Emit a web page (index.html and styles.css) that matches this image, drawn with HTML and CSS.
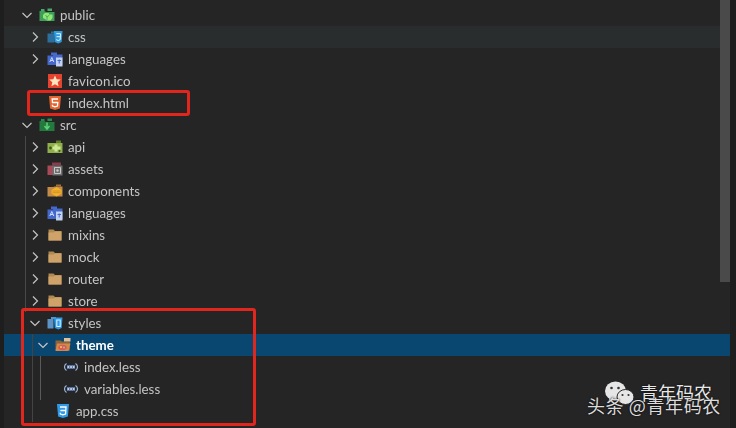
FILE: index.html
```html
<!DOCTYPE html>
<html>
<head>
    <title>Explorer</title>
    <link rel="stylesheet" href="styles.css">
</head>
<body>
    <svg class="defs" width="0" height="0">
        <symbol id="open" viewBox="0 0 16 16"><path d="M3.500 6 8 10.500 12.500 6" fill="none" stroke="#c5c5c5" stroke-width="1.200"/></symbol>
        <symbol id="closed" viewBox="0 0 16 16"><path d="M6 3.500 10.500 8 6 12.500" fill="none" stroke="#c5c5c5" stroke-width="1.200"/></symbol>
        <symbol id="folder" viewBox="0 0 16 16"><path d="M1.500 2.500h5l1.500 1.500h6.500v9.500h-13z" fill="#b08a50"/><path d="M1.500 5.500h5l1.500-1h6.500v9h-13z" fill="#cfa26a"/></symbol>
        <symbol id="f-public" viewBox="0 0 16 16"><path d="M.5 4h5l1.500 1h8.500v9H.5z" fill="#3f9e5c"/><path d="M2 2h3.500v2H2zM8.500 1.500H13V4H8.500z" fill="#4aa868"/><path d="M6 6h3.500l1 1.500h3v3.500l-2 2.500H8L6 12 4 11V8z" fill="#8fe870"/><path d="M6.500 8 8 10l2.500-2M8 10v3" stroke="#4aa868" stroke-width="1" fill="none"/></symbol>
        <symbol id="f-src" viewBox="0 0 16 16"><path d="M.5 4h5l1.500 1h8.500v9H.5z" fill="#237a3f"/><path d="M2 2h3.500v2H2zM8.500 1.500H13V4H8.500z" fill="#2e8a4c"/><path d="M8 5.500v6M5.500 9 8 12l2.500-3" stroke="#5fd07a" stroke-width="1.500" fill="none"/></symbol>
        <symbol id="f-css" viewBox="0 0 16 16"><path d="M.500 4.500h7v9h-7z" fill="#2c6f9e"/><path d="M4 2.500h4v2H4z" fill="#2c6f9e"/><path d="M7 2h8.500l-.8 11L11.200 14.500 7.800 13z" fill="#2f9ce0"/><path d="M9.300 4.700h4.200l-.3 6-2 .8-1.900-.8M9.500 7.700h3.700" stroke="#e8f6ff" stroke-width="1" fill="none"/></symbol>
        <symbol id="f-lang" viewBox="0 0 16 16"><path d="M.5 4.500h5l1.500-1h8.500V14H.5z" fill="#4468cc"/><path d="M4 1.500h6v2.500H4z" fill="#4468cc"/><path d="M9 6.500h6.500v9H9z" fill="#c3d2ee"/><path d="M2.800 11 4.800 6.500 6.800 11M3.600 9.500H6" stroke="#cfdcff" stroke-width="1" fill="none"/><path d="M10.500 9.500h3.500M12.200 8.500v4" stroke="#4468cc" stroke-width="1" fill="none"/></symbol>
        <symbol id="f-api" viewBox="0 0 16 16"><path d="M.5 4h5l1.500 0h8.500v10H.5z" fill="#8fb04a"/><path d="M9 1.500h5V4H9z" fill="#5f7d2c"/><path d="M7.500 5.500h3v2h3v3h-3v2h-3v-2h-2v-3h2z" fill="#cfe896"/><circle cx="3.500" cy="9" r="1.400" fill="#3d5a1e"/><circle cx="12.500" cy="12" r="1" fill="#3d5a1e"/></symbol>
        <symbol id="f-assets" viewBox="0 0 16 16"><path d="M.5 4.500h6V14H.5z" fill="#a84a58"/><path d="M5 1.500h9v3H5z" fill="#8a3c48"/><path d="M5.500 4.500h10v10h-10z" fill="#6f6f6f"/><path d="M7.500 6.500h6v6h-6z" fill="none" stroke="#c8c8c8" stroke-width="1"/><circle cx="10.500" cy="9.500" r="1.200" fill="#c8c8c8"/></symbol>
        <symbol id="f-comp" viewBox="0 0 16 16"><path d="M.5 4h6l1-.5h8V13.500H.5z" fill="#c48a48"/><path d="M9 1.500h5v2H9z" fill="#a87036"/><path d="M9.500 4 14.500 7v3.500L9.500 13.500l-5-3V7z" fill="#f2b32a"/><path d="M5.500 8h8M5.500 9.700h8" stroke="#c98a24" stroke-width=".8"/></symbol>
        <symbol id="f-styles" viewBox="0 0 16 16"><path d="M.5 4h6v9.500H.5z" fill="#5b93c4"/><path d="M4 2h5v2H4z" fill="#5b93c4"/><path d="M7 2.500h8.500l-.8 10.500-3.300 1.500L7.800 13z" fill="#2f9be8"/><path d="M9.800 5h3.400v6.500H9.800z" fill="none" stroke="#d8efff" stroke-width="1.100"/></symbol>
        <symbol id="f-theme" viewBox="0 0 16 16"><path d="M.5 3.500h5l1.500 1h8v9H.5z" fill="#8f6238"/><path d="M9 1h6.500v3.500H9z" fill="#dcc09c"/><path d="M2 6.500h13.500l-2 7.500H.5z" fill="#d08a50"/><ellipse cx="7.500" cy="10.500" rx="4.200" ry="2.700" fill="#dd5a48"/><circle cx="6" cy="10" r=".9" fill="#f7d96b"/><circle cx="9" cy="10.500" r=".9" fill="#7fc7e8"/></symbol>
        <symbol id="f-less" viewBox="0 0 16 16"><path d="M3.500 4.500C2 5.500 1.500 6.500 1.500 8s.5 2.500 2 3.500M12.500 4.500c1.500 1 2 2 2 3.500s-.5 2.500-2 3.500" fill="none" stroke="#9db8dc" stroke-width="1.200"/><path d="M4 6.200h8v3.600H4z" fill="#5878b0"/><path d="M4.500 6.800 6 9.200M6 6.800 4.500 9.200M7.300 6.800 8.800 9.200M8.800 6.800 7.300 9.200M10 6.800l1.500 2.400M11.500 6.800 10 9.200" stroke="#dfe9f7" stroke-width=".7"/></symbol>
    </svg>

    <div class="app">
        <div class="tree">
            <div class="row d0"><svg class="chev"><use href="#open"/></svg><svg class="ico"><use href="#f-public"/></svg><span>public</span></div>
            <div class="row d1 hover"><svg class="chev"><use href="#closed"/></svg><svg class="ico"><use href="#f-css"/></svg><span>css</span></div>
            <div class="row d1"><svg class="chev"><use href="#closed"/></svg><svg class="ico"><use href="#f-lang"/></svg><span>languages</span></div>
            <div class="row d1"><div class="chev"></div>
                <svg class="ico" viewBox="0 0 16 16"><path d="M1 1h14v14H1z" fill="#e5432f"/><path d="M8 2.500l1.700 3.700 4 .4-3 2.700.9 4L8 11.200l-3.600 2.100.9-4-3-2.700 4-.4z" fill="#ffe4bd"/></svg><span>favicon.ico</span></div>
            <div class="row d1"><div class="chev"></div>
                <svg class="ico" viewBox="0 0 16 16"><path d="M2 1h12l-1.100 12.500L8 15l-4.900-1.500z" fill="#e4652f"/><path d="M11 4H5.200l.3 3.500h5.300l-.3 3.500-2.500.8-2.500-.8-.1-1.200" fill="none" stroke="#fff" stroke-width="1.300"/></svg><span>index.html</span></div>
            <div class="row d0"><svg class="chev"><use href="#open"/></svg><svg class="ico"><use href="#f-src"/></svg><span>src</span></div>
            <div class="row d1"><svg class="chev"><use href="#closed"/></svg><svg class="ico"><use href="#f-api"/></svg><span>api</span></div>
            <div class="row d1"><svg class="chev"><use href="#closed"/></svg><svg class="ico"><use href="#f-assets"/></svg><span>assets</span></div>
            <div class="row d1"><svg class="chev"><use href="#closed"/></svg><svg class="ico"><use href="#f-comp"/></svg><span>components</span></div>
            <div class="row d1"><svg class="chev"><use href="#closed"/></svg><svg class="ico"><use href="#f-lang"/></svg><span>languages</span></div>
            <div class="row d1"><svg class="chev"><use href="#closed"/></svg><svg class="ico"><use href="#folder"/></svg><span>mixins</span></div>
            <div class="row d1"><svg class="chev"><use href="#closed"/></svg><svg class="ico"><use href="#folder"/></svg><span>mock</span></div>
            <div class="row d1"><svg class="chev"><use href="#closed"/></svg><svg class="ico"><use href="#folder"/></svg><span>router</span></div>
            <div class="row d1"><svg class="chev"><use href="#closed"/></svg><svg class="ico"><use href="#folder"/></svg><span>store</span></div>
            <div class="row d1"><svg class="chev"><use href="#open"/></svg><svg class="ico"><use href="#f-styles"/></svg><span>styles</span></div>
            <div class="row d2 selected"><svg class="chev"><use href="#open"/></svg><svg class="ico"><use href="#f-theme"/></svg><span>theme</span></div>
            <div class="row d3"><div class="chev"></div><svg class="ico"><use href="#f-less"/></svg><span>index.less</span></div>
            <div class="row d3"><div class="chev"></div><svg class="ico"><use href="#f-less"/></svg><span>variables.less</span></div>
            <div class="row d2"><div class="chev"></div>
                <svg class="ico" viewBox="0 0 16 16"><path d="M2 1h12l-1.100 12.500L8 15l-4.900-1.500z" fill="#2f9be8"/><path d="M5 4h6l-.4 7-2.600.9-2.600-.9-.1-1.300M5.400 7.500h5.200" fill="none" stroke="#fff" stroke-width="1.300"/></svg><span>app.css</span></div>
        </div>
        <div class="scrollbar"></div>
    </div>

    <div class="guide g1"></div>
    <div class="guide g2"></div>
    <div class="guide g3"></div>
    <div class="mark m1"></div>
    <div class="mark m2"></div>

    <div class="water">
        <svg class="wechat" viewBox="0 0 30 25">
            <ellipse cx="11" cy="10" rx="10.500" ry="9.500" fill="#e6e6e6"/>
            <path d="M5 16l-1 5 5-3z" fill="#e6e6e6"/>
            <ellipse cx="21" cy="16" rx="8.500" ry="7.500" fill="#e6e6e6" stroke="#252526"/>
            <circle cx="7" cy="7" r="1.300" fill="#333"/><circle cx="14" cy="7" r="1.300" fill="#333"/>
            <circle cx="18" cy="14" r="1.100" fill="#333"/><circle cx="24" cy="14" r="1.100" fill="#333"/>
        </svg>
        <div class="water-text">
            <div class="w1">青年码农</div>
            <div class="w2">头条 @青年码农</div>
        </div>
    </div>
</body>
</html>
```
FILE: styles.css
```css
body {
    margin: 0;
    width: 736px;
    height: 428px;
    overflow: hidden;
    position: relative;
    background-color: #1e1e1e;
    font-family: "Lato", "Open Sans", sans-serif;
}

.defs {
    position: absolute;
}

.app {
    position: relative;
    height: 428px;
    margin-left: 4px;
    margin-right: 6px;
    background-color: #252526;
}

.tree {
    padding-top: 4px;
    filter: blur(0.3px);
}

.scrollbar {
    position: absolute;
    top: 0;
    right: 0;
    width: 10px;
    height: 282px;
    background-color: #4a4a4a;
}

.row {
    display: flex;
    align-items: center;
    height: 22px;
    font-size: 13.3px;
    color: #c4c4c4;
}

.row.d0 { padding-left: 15px; }
.row.d1 { padding-left: 23px; }
.row.d2 { padding-left: 31px; }
.row.d3 { padding-left: 39px; }

.row.hover {
    background-color: #2a2d2e;
}

.row.selected {
    background-color: #094771;
    color: #ffffff;
    font-weight: 700;
}

.chev {
    width: 16px;
    height: 16px;
    margin-right: 4px;
    flex-shrink: 0;
}

.ico {
    width: 16px;
    height: 16px;
    margin-right: 5px;
    flex-shrink: 0;
}

.guide {
    position: absolute;
    width: 1px;
    background-color: #4a4a4a;
}

.g1 { left: 25px; top: 136px; height: 176px; }
.g2 { left: 32px; top: 334px; height: 88px; background-color: #444; }
.g3 { left: 40px; top: 356px; height: 44px; background-color: #5a5a5a; }

.mark {
    position: absolute;
    box-sizing: border-box;
    border: 3px solid #e0261d;
    border-radius: 3px;
}

.m1 { left: 27px; top: 90px; width: 163px; height: 26px; }
.m2 { left: 21px; top: 308px; width: 235px; height: 118px; }

.water {
    position: absolute;
    left: 586px;
    top: 381px;
    width: 140px;
    height: 36px;
}

.wechat {
    position: absolute;
    left: 18px;
    top: 0;
    width: 31px;
    height: 25px;
}

.water-text {
    font-family: "Noto Sans CJK SC", sans-serif;
    color: #e8e8e8;
    white-space: nowrap;
    text-shadow: 0 0 2px #000;
}

.w1 {
    position: absolute;
    left: 54px;
    top: 0;
    font-size: 18px;
    line-height: 22px;
}

.w2 {
    position: absolute;
    left: 1px;
    top: 13px;
    font-size: 18px;
    line-height: 22px;
    letter-spacing: 0.6px;
    color: #dcdcdc;
}
```
